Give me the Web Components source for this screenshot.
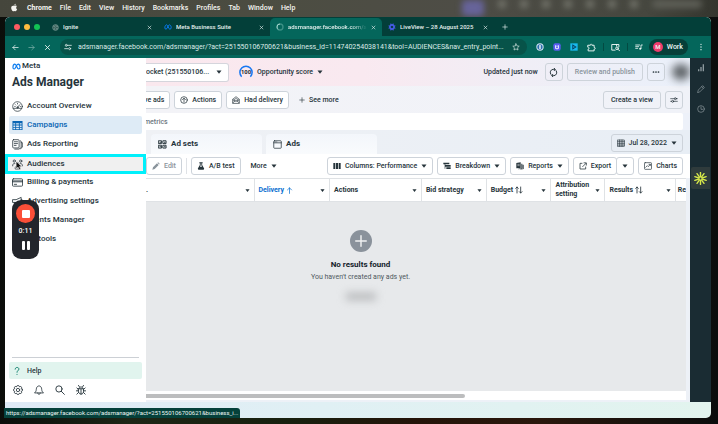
<!DOCTYPE html>
<html lang="en">
<head>
<meta charset="utf-8">
<title>Ads Manager</title>
<style>
html,body{margin:0;height:100%}
body{font:500 7px/10px Roboto,"Liberation Sans",sans-serif;color:#26343b;background:#15160f;overflow:hidden}
</style>
</head>
<body>
<desktop-screen></desktop-screen>
<script>
const define=(name,html,init)=>customElements.define(name,class extends HTMLElement{
  constructor(){
    super();
    const t=document.createElement('template');
    t.innerHTML='<style>*{box-sizing:border-box}button,input,select{font:inherit;color:inherit;margin:0}</style>'+html;
    this.attachShadow({mode:'open'}).append(t.content.cloneNode(true));
  }
  connectedCallback(){ if(init) init(this,this.shadowRoot); }
});

const S='fill="none" stroke="currentColor" stroke-linecap="round" stroke-linejoin="round"';
const gear=(n,r1,r2)=>{let d='';for(let i=0;i<n*2;i++){const a=Math.PI*(i-.5)/n,b=Math.PI*(i+.5)/n,r=i%2?r1:r2;
  d+=(i?'L':'M')+(12+r*Math.cos(a+.06)).toFixed(2)+' '+(12+r*Math.sin(a+.06)).toFixed(2)+'L'+(12+r*Math.cos(b-.06)).toFixed(2)+' '+(12+r*Math.sin(b-.06)).toFixed(2);}return d+'Z';};
const rays=n=>Array.from({length:n},(_,i)=>`<path d="M12 9V1" transform="rotate(${i*360/n} 12 12)"/>`).join('');
const ICONS={
apple:'<path fill="currentColor" d="M16.5 12.6c0-2.4 2-3.600 2.100-3.700-1.200-1.700-3-1.900-3.600-2-1.500-.1-3 .9-3.700.9-.8 0-2-.9-3.200-.8-1.700 0-3.200 1-4.100 2.400-1.700 3-.4 7.500 1.300 10 .8 1.200 1.800 2.500 3.100 2.500 1.200-.1 1.700-.8 3.200-.8s1.900.8 3.200.8 2.200-1.200 3-2.400c.9-1.400 1.300-2.700 1.300-2.800-.1 0-2.600-1-2.600-4.100zM14.100 5.400c.7-.8 1.100-2 1-3.200-1 0-2.200.7-2.900 1.500-.6.7-1.200 1.900-1 3 1.100.1 2.200-.5 2.900-1.300z"/>',
globe:`<g fill="none" stroke="#7fa39e" stroke-width="2"><circle cx="12" cy="12" r="10" fill="#3a5f5a"/><path d="M4 7l6 2 1 4-3 2v5M14 3l-1 4 4 2 4-1M20 16l-5-1-1 5"/></g>`,
meta:'<path fill="none" stroke="#0a7cf0" stroke-width="3" d="M2.500 14.500C2.500 9 5 5.500 7.800 5.500c4.200 0 5.200 13 9.700 13 2.600 0 4-1.700 4-4.500 0-5-2.300-8.500-5.300-8.500-4.400 0-6 13-10.200 13-2.200 0-3.500-1.500-3.500-4z"/>',
spinner:`<circle cx="12" cy="12" r="9" fill="none" stroke="#3b8f84" stroke-width="4"/><path d="M12 3a9 9 0 0 0-9 9c0 3 1.500 5.500 3.500 7" fill="none" stroke="#9ed3ca" stroke-width="3"/>`,
live:`<path fill="#4b5ef0" d="${gear(8,11,8)}"/><circle cx="12" cy="12" r="4" fill="#0a3d4a"/>`,
x:`<path ${S} stroke-width="3" d="M5 5l14 14M19 5L5 19"/>`,
plus:`<path ${S} stroke-width="2.500" d="M12 3v18M3 12h18"/>`,
back:`<path ${S} stroke-width="2.500" d="M21 12H3M11 4l-8 8 8 8"/>`,
fwd:`<path ${S} stroke-width="2.500" d="M3 12h18M13 4l8 8-8 8"/>`,
tune:`<g ${S} stroke-width="2.500"><circle cx="7" cy="7" r="3"/><path d="M13 7h9M2 17h9"/><circle cx="17" cy="17" r="3"/></g>`,
sliders:`<g ${S} stroke-width="2"><path d="M2 8h11M19 8h3M2 16h3M11 16h11"/><circle cx="16" cy="8" r="3"/><circle cx="8" cy="16" r="3"/></g>`,
star:`<path ${S} stroke-width="2" d="M12 2.500l2.900 6.300 6.800.8-5 4.700 1.300 6.800-6-3.400-6 3.400 1.300-6.800-5-4.700 6.800-.8z"/>`,
onepw:'<circle cx="12" cy="12" r="11" fill="#d5e6f5"/><circle cx="12" cy="12" r="8" fill="#2c6fae"/><rect x="10" y="6" width="4" height="12" rx="1" fill="#fff"/>',
ext1:'<rect x="1" y="1" width="22" height="22" rx="6" fill="#5a5cf0"/><path d="M6 6l4 2h4l4-2v8c0 3-3 5-6 5s-6-2-6-5z" fill="#dfe3ff"/><circle cx="12" cy="13" r="3" fill="#5a5cf0"/>',
ext2:'<rect x="1" y="1" width="22" height="22" fill="#18b9ee"/><path d="M7 4l13 8-13 8z" fill="#073b5a"/><path d="M10 9l5 3-5 3z" fill="#18b9ee"/>',
puzzle:`<path ${S} stroke-width="2.500" d="M3 6h6c-1-4 5-4 4 0h6v6c4-1 4 5 0 4v5H3v-5c4 0 4-5 0-5z"/>`,
lens:`<g ${S} stroke-width="2.500"><path d="M21 10V4H2v15h9M15 4v4"/><circle cx="16" cy="14" r="3.500"/><path d="M19 17l4 4"/></g>`,
queue:`<g ${S} stroke-width="2.500"><path d="M2 6h12M2 11h9M2 16h6M18 17V6h4"/></g><circle cx="15.500" cy="17" r="3" fill="currentColor"/>`,
dots:'<g fill="currentColor"><circle cx="12" cy="4" r="2"/><circle cx="12" cy="12" r="2"/><circle cx="12" cy="20" r="2"/></g>',
more:'<g fill="currentColor"><circle cx="4.500" cy="12" r="2.600"/><circle cx="12" cy="12" r="2.600"/><circle cx="19.500" cy="12" r="2.600"/></g>',
gauge:`<g ${S} stroke-width="1.600"><circle cx="12" cy="12" r="10.500"/><path d="M3 16h18M12 14l5-6M6 12h1M7.500 8l.7.700M12 5v1.500M18 12h.500"/><circle cx="12" cy="14" r="1.500"/></g>`,
grid:`<path fill="currentColor" fill-rule="evenodd" d="M1 2h22v20H1zM3 7v3h4V7zM9 7v3h6V7zM17 7v3h4V7zM3 12v3h4v-3zM9 12v3h6v-3zM17 12v3h4v-3zM3 17v3h4v-3zM9 17v3h6v-3zM17 17v3h4v-3z"/>`,
report:`<g ${S} stroke-width="1.700"><rect x="1.500" y="1.500" width="14" height="18" rx="2"/><path d="M5 6h7M5 10h7M5 14h4M18 4l2 1v14l-5 3H6M20 8h2.500v10L19 21"/></g>`,
people:`<g ${S} stroke-width="1.700"><circle cx="12" cy="10" r="2.500"/><circle cx="5" cy="4.500" r="2.500"/><circle cx="19" cy="4.500" r="2.500"/><path d="M7 21v-2c0-5 10-5 10 0v2zM1.500 15v-2c0-2 2-3 4.500-3M22.500 15v-2c0-2-2-3-4.500-3"/></g>`,
card:`<g ${S} stroke-width="1.800"><rect x="1" y="4" width="22" height="16" rx="2"/><path d="M1 8.500h22M1 10.500h22M5 16h5"/></g>`,
horn:`<path ${S} stroke-width="1.800" d="M2 8h7l11-5v16L9 14H2zM5 14v7h4v-7M20 8l2 0v5h-2"/>`,
help:`<path ${S} stroke-width="2.400" d="M7.500 7.500c0-5.500 9-5.500 9 0 0 3.500-4.500 3.500-4.500 7.500M12 20v.300"/>`,
cog:`<g ${S} stroke-width="2"><path d="${gear(8,9,11)}"/><circle cx="12" cy="12" r="4"/></g>`,
bell:`<path ${S} stroke-width="2" d="M2 18.500c4-3 3-7 4-11 1.500-7 10.500-7 12 0 1 4 0 8 4 11zM9 19c0 5 6 5 6 0"/>`,
search:`<g ${S} stroke-width="2.200"><circle cx="9.500" cy="9.500" r="7.500"/><path d="M15 15l7.500 7.500"/></g>`,
bug:`<g ${S} stroke-width="2.200"><path d="M6 9h12v7c0 8-12 8-12 0zM7 9c0-6 10-6 10 0M12 10v12M8 4L6 1M16 4l2-3M6 14H1M6 18l-4 4M18 14h5M18 18l4 4M5 10L2 7M19 10l3-3"/></g>`,
up:`<g ${S} stroke-width="2.200"><circle cx="12" cy="12" r="10"/><path d="M12 18V7M7.500 11L12 6.500l4.500 4.500"/></g>`,
mail:`<g ${S} stroke-width="2"><path d="M2 21V10l10-8 10 8v11zM6 13c0-7 12-7 12 0M3 20l7-6h4l7 6M3 11l7 5M21 11l-7 5"/></g>`,
refresh:`<g ${S} stroke-width="2.600"><path d="M5 17A8.500 8.500 0 0 1 11 3.500h4M19 7a8.500 8.500 0 0 1-6 13.500H9M14 1l3 2.700L14 7M10 17l-3 3.500L10 23"/></g>`,
score:'<path d="M4.500 20A10.500 10.500 0 1 1 19.500 20" fill="none" stroke="#1877f2" stroke-width="2.600"/><text x="12" y="15.500" text-anchor="middle" font-family="Roboto,sans-serif" font-weight="700" font-size="10" fill="#1c2b33">100</text>',
sets:`<g ${S} stroke-width="2.500"><rect x="2" y="2" width="7.500" height="7.500"/><rect x="14" y="2" width="7.500" height="7.500"/><rect x="2" y="14" width="7.500" height="7.500"/><rect x="14" y="14" width="7.500" height="7.500"/><path d="M5 6h2M17 6h2M5 18h2M17 18h2"/></g>`,
ad:`<g ${S} stroke-width="2"><rect x="2" y="2" width="20" height="20" rx="2"/><path d="M2 7.500h20M6 5h.2M10 5h.2"/></g>`,
pencil:'<path fill="currentColor" d="M1 23l2-7L15 4l5 5L8 21zM16.500 2.500L18.500 1 23 5.500 21.500 7.500z"/>',
pen:`<path ${S} stroke-width="2" d="M2 22l2-7L17 2l5 5L9 20zM14 5l5 5"/>`,
flask:'<path fill="currentColor" d="M7 1h10v2.500h-1.500V9L21 19c1 2 0 4-2 4H5c-2 0-3-2-2-4L8.500 9V3.500H7zM11 3.500V10l-2 4h6l-2-4V3.500z"/>',
cols:'<path fill="currentColor" d="M1 3h6v18H1zM9 3h6v18H9zM17 3h6v18h-6z"/>',
break:'<path fill="currentColor" d="M1 2h18v5H1zM7 9h16v5H7zM10 16h13v5H10zM5 7h2v13H5z"/>',
reports:'<path fill="currentColor" d="M1 3l13-2v17L1 19zM16 5h3v15l-12 2v-2l9-1zM20 8h3v13l-10 2v-1l7-1z"/><path stroke="#fff" stroke-width="1.500" d="M4 7h7M4 11h7"/>',
export:`<path ${S} stroke-width="2.300" d="M9 4H3v17h17v-6M11 14L21 4M15 2.500h7v7"/>`,
chart:`<g ${S} stroke-width="2"><rect x="1.500" y="2" width="21" height="20" rx="2"/><path d="M5 16l5-5 3 3 6-7M15 7h4v4"/></g>`,
cal:`<path ${S} stroke-width="2" d="M2 3h20v19H2zM2 8h20M2 13h20M2 18h20M8 3v19M15 3v19"/>`,
bars:'<path fill="currentColor" d="M3 16h4v6H3zM10 9h4v13h-4zM17 1h4v21h-4z"/>',
clock:`<g ${S} stroke-width="2"><circle cx="12" cy="12" r="10"/><path d="M12 6v7h5"/></g>`,
burst:`<g ${S} stroke-width="2.600">${rays(10)}</g>`,
cursor:'<path d="M3 1v20l5-4.500L11.500 23l4-2-3.500-6h7z" fill="#111" stroke="#fff" stroke-width="1.500"/>',
sort:`<path ${S} stroke-width="2.500" d="M6 21V3M2 7l4-4 4 4M17 3v18M13 17l4 4 4-4"/>`,
asc:`<path ${S} stroke-width="2.500" d="M12 22V3M5 10l7-7 7 7"/>`,
caret:'<path fill="currentColor" d="M2 6h20L12 19z"/>'
};
define('ui-icon',`<style>:host{display:inline-flex;flex:none;width:var(--s,10px);height:var(--s,10px)}svg{width:100%;height:100%}</style><svg viewBox="0 0 24 24" aria-hidden="true"></svg>`,
(h,r)=>{h.style.setProperty('--s',(h.getAttribute('size')||10)+'px');r.querySelector('svg').innerHTML=ICONS[h.getAttribute('name')];});

define('ui-button',`<style>
:host{display:flex;flex:none}
button{display:flex;align-items:center;justify-content:center;gap:4px;height:18px;padding:0 5px;border:1px solid #cdd3da;border-radius:3px;background:#fff;white-space:nowrap;width:100%}
:host([plain]) button{border-color:transparent;background:none}
:host([clear]) button{background:none}
:host([wide]) button{padding:0 7px}
:host([square]) button{padding:0;width:18px}
:host([dim]) button{color:#8a949c}
</style><button><slot></slot></button>`,(h,r)=>{const l=h.getAttribute('label');if(l)r.querySelector('button').setAttribute('aria-label',l);});

define('mac-menubar',`<style>
:host{display:flex;align-items:center;height:17px;padding:0 16px 2px 10px;background:linear-gradient(90deg,#45463c,#4c4d42 40%,#4e4d46 64%,#46473f 90%,#34352e);color:#f4f4f0;overflow:hidden}
nav{display:flex;align-items:center;gap:8px;flex:1}
b{font-weight:700}
.tray{display:flex;gap:14px;filter:blur(3px)}
i{width:8px;height:8px;border-radius:4px;background:#77786f}i:first-child{background:#67649a;width:22px;height:16px}i:last-child{width:50px;background:#5f6058}
</style><nav><ui-icon name="apple" size="9"></ui-icon><b>Chrome</b><span>File</span><span>Edit</span><span>View</span><span>History</span><span>Bookmarks</span><span>Profiles</span><span>Tab</span><span>Window</span><span>Help</span></nav>
<div class="tray"><i></i><i></i><i></i><i></i><i></i><i></i><i></i><i></i><i></i></div>`);

define('browser-tab',`<style>
:host{display:flex;align-items:center;gap:4px;width:112px;height:18px;padding:0 6px;color:#e3efed;border-radius:5px 5px 0 0;font-size:6px}
:host([active]){background:#04665b}
span{flex:1;overflow:hidden;white-space:nowrap}
:host([active]) span{-webkit-mask:linear-gradient(90deg,#000 80%,transparent)}
button{display:flex;border:0;background:none;padding:0}
</style><slot name="icon"></slot><span><slot></slot></span><button aria-label="Close tab"><ui-icon name="x" size="5"></ui-icon></button>`);

define('browser-chrome',`<style>
:host{display:block;color:#eef7f5}
.tabs{display:flex;align-items:end;height:19px;background:#033f39;border-radius:5px 5px 0 0;padding-left:9px}
.lights{display:flex;align-self:center;gap:4px;margin-right:6px}
.lights i{width:6px;height:6px;border-radius:3px;background:#fc5b62}.lights i+i{background:#fdbc40}.lights i+i+i{background:#12c454}
.tabs>button{display:flex;align-self:center;border:0;background:none;padding:0;margin-left:8px}
.bar{display:flex;align-items:center;height:22px;background:#04665b;padding:0 6px 0 7px;gap:9px}
.bar>button{display:flex;border:0;background:none;padding:0}
.url{display:flex;align-items:center;gap:6px;flex:1;height:16px;border-radius:8px;background:#075349;padding:0 7px 0 4px;color:#dcebe8}
.url input{flex:1;min-width:0;border:0;padding:0;background:none;outline:0;text-overflow:ellipsis;font-weight:400}
hr{width:1px;height:8px;margin:0 -2px;border:0;background:#034a42}
.bar>.profile{align-items:center;gap:4px;height:16px;background:#063f39;border-radius:8px;padding:0 5px 0 4px;margin-left:-3px}
.profile i{font-style:normal;width:10px;height:10px;border-radius:5px;background:#ef3b6c;font-size:6px;text-align:center}
</style>
<div class="tabs"><div class="lights"><i></i><i></i><i></i></div>
<browser-tab><ui-icon slot="icon" name="globe" size="7"></ui-icon>Ignite</browser-tab>
<browser-tab><ui-icon slot="icon" name="meta" size="8"></ui-icon>Meta Business Suite</browser-tab>
<browser-tab active><ui-icon slot="icon" name="spinner" size="8"></ui-icon>adsmanager.facebook.com/a</browser-tab>
<browser-tab><ui-icon slot="icon" name="live" size="8"></ui-icon>LiveView – 28 August 2025</browser-tab>
<button aria-label="New tab"><ui-icon name="plus" size="6"></ui-icon></button></div>
<div class="bar"><button aria-label="Back"><ui-icon name="back" size="7"></ui-icon></button><button aria-label="Forward" style="opacity:.5"><ui-icon name="fwd" size="7"></ui-icon></button><button aria-label="Stop"><ui-icon name="x" size="7"></ui-icon></button>
<div class="url"><ui-icon name="tune" size="8"></ui-icon><input aria-label="Address" value="adsmanager.facebook.com/adsmanager/?act=251550106700621&amp;business_id=114740254038141&amp;tool=AUDIENCES&amp;nav_entry_point..."><ui-icon name="star" size="8"></ui-icon></div>
<ui-icon name="onepw" size="8"></ui-icon><ui-icon name="ext1" size="8"></ui-icon><ui-icon name="ext2" size="8"></ui-icon><ui-icon name="puzzle" size="9"></ui-icon><hr><ui-icon name="lens" size="9"></ui-icon><hr><ui-icon name="queue" size="8"></ui-icon>
<button class="profile"><i>M</i>Work</button><button aria-label="Menu"><ui-icon name="dots" size="8"></ui-icon></button></div>`);

define('nav-item',`<style>
:host{display:block;height:19px;padding:0 4px}
a{display:flex;align-items:center;gap:4px;height:18px;padding:0 3px;border-radius:2px;color:inherit;text-decoration:none;font-size:8px;white-space:nowrap}
:host([active]) a{background:#deebf6;color:#0a66b4}
:host([hot]){padding:0}
:host([hot]) a{height:20px;padding:0 4px;border:3px solid #00f0fb;background:#f0f0f0;border-radius:0}
:host([help]) a{background:#e1f4ee;height:17px;gap:5px;font-size:7px}
</style><a href="#"><slot></slot></a>`);

define('ads-nav',`<style>
:host{display:flex;flex-direction:column;width:141px;flex:none;background:#fff}
.brand{display:flex;align-items:center;gap:1px;padding:3px 7px 0;font-size:8px}
h1{margin:5px 7px 9px;font:700 12px/12px Roboto,sans-serif}
nav{flex:1}
hr{margin:0 7px 4px;border:0;border-top:1px solid #ccd0d5;width:127px}
.tools{display:flex;gap:11px;padding:4px 8px 7px}
button{display:flex;border:0;padding:0;background:none}
</style>
<div class="brand"><ui-icon name="meta" size="9"></ui-icon>Meta</div><h1>Ads Manager</h1>
<nav>
<nav-item><ui-icon name="gauge" size="11"></ui-icon>Account Overview</nav-item>
<nav-item active><ui-icon name="grid" size="11"></ui-icon>Campaigns</nav-item>
<nav-item><ui-icon name="report" size="11"></ui-icon>Ads Reporting</nav-item>
<nav-item hot><ui-icon name="people" size="11"></ui-icon>Audiences</nav-item>
<nav-item><ui-icon name="card" size="11"></ui-icon>Billing &amp; payments</nav-item>
<nav-item><ui-icon name="horn" size="11"></ui-icon>Advertising settings</nav-item>
<nav-item><ui-icon name="gauge" size="11"></ui-icon>Events Manager</nav-item>
<nav-item><ui-icon name="grid" size="11"></ui-icon>All tools</nav-item>
</nav><hr>
<nav-item help><ui-icon name="help" size="10" style="color:#14806f"></ui-icon>Help</nav-item>
<div class="tools"><button aria-label="Settings"><ui-icon name="cog"></ui-icon></button><button aria-label="Notifications"><ui-icon name="bell"></ui-icon></button><button aria-label="Search"><ui-icon name="search"></ui-icon></button><button aria-label="Report a bug"><ui-icon name="bug"></ui-icon></button></div>`);

define('ads-header',`<style>
:host{display:block;background:linear-gradient(90deg,#f8edf2,#f4eff6 40%,#eef1f8 75%,#edf1f9)}
.row{display:flex;align-items:center;gap:4px;padding-right:7px}
.top{height:28px;background:linear-gradient(90deg,#fae8ee,#f9e9f0 40%,#f0eef6 70%,#eaf0fa)}
.filters{height:27px;background:linear-gradient(90deg,#f3f3f7,#f0f2f8)}
.acct{display:flex;align-items:center;height:19px;width:83px;background:#fff;border:1px solid #d5d5dc;border-left:0;border-radius:0 3px 3px 0}
select{appearance:none;border:0;background:none;padding:0;width:70px;outline:0}
.sp{flex:1}
.ve{margin-left:-8px}
.blur{width:18px;height:16px;margin:0 -7px 0 3px;border-radius:8px;background:#5f6468;filter:blur(4px)}
.search{display:block;padding-right:7px}
input{display:block;width:100%;height:17px;border:0;border-radius:0 2px 2px 0;background:#fff;padding:0;text-indent:-2px;outline:0}
input::placeholder{color:#6d7780;opacity:1}
.tabs{display:flex;gap:4px;padding:5px 7px 0 5px;height:24px;align-items:end;background:linear-gradient(90deg,#eff1f5,#e8eef5)}
.tab{display:flex;align-items:center;gap:4px;flex:0 0 111px;height:20px;padding:0 7px;border:0;border-radius:4px 4px 0 0;background:linear-gradient(#f3f6fb,#f9fbfd);font-size:8px;font-weight:700}
.tabs ui-button{align-self:start;margin-top:-1px}
</style>
<div class="row top"><div class="acct"><select aria-label="Ad account"><option>ocket (251550106...</option></select><ui-icon name="caret" size="6"></ui-icon></div>
<ui-button plain><ui-icon name="score" size="14"></ui-icon>Opportunity score<ui-icon name="caret" size="6"></ui-icon></ui-button>
<span class="sp"></span><span>Updated just now</span><ui-button clear square label="Refresh" style="margin-left:3px"><ui-icon name="refresh" size="9"></ui-icon></ui-button><ui-button clear dim wide>Review and publish</ui-button><ui-button clear square label="More"><ui-icon name="more" size="8"></ui-icon></ui-button><span class="blur"></span></div>
<div class="row filters"><ui-button class="ve">ve ads</ui-button><ui-button><ui-icon name="up" size="8"></ui-icon>Actions</ui-button><ui-button><ui-icon name="mail" size="8"></ui-icon>Had delivery</ui-button><ui-button plain><ui-icon name="plus" size="6"></ui-icon>See more</ui-button><span class="sp"></span><ui-button clear wide>Create a view</ui-button><ui-button clear square label="View options"><ui-icon name="sliders" size="8"></ui-icon></ui-button></div>
<div class="search"><input aria-label="Search" placeholder="metrics"></div>
<div class="tabs"><button class="tab"><ui-icon name="sets" size="9"></ui-icon>Ad sets</button><button class="tab"><ui-icon name="ad" size="9"></ui-icon>Ads</button><span class="sp"></span><ui-button clear><ui-icon name="cal" size="8"></ui-icon>Jul 28, 2022<ui-icon name="caret" size="6"></ui-icon></ui-button></div>`);

define('ads-toolbar',`<style>
:host{display:flex;align-items:center;gap:4px;height:24px;padding-right:7px;background:#fff}
hr{width:1px;height:16px;margin:0;border:0;background:#dfe2e6}
.sp{flex:1}
.split{display:flex}.split ui-button+ui-button{margin-left:-1px}
</style><ui-button dim><ui-icon name="pencil" size="8"></ui-icon>Edit</ui-button><hr><ui-button><ui-icon name="flask" size="8"></ui-icon>A/B test</ui-button><ui-button plain>More<ui-icon name="caret" size="6"></ui-icon></ui-button><span class="sp"></span>
<ui-button><ui-icon name="cols" size="8"></ui-icon>Columns: Performance<ui-icon name="caret" size="6"></ui-icon></ui-button>
<ui-button><ui-icon name="break" size="8"></ui-icon>Breakdown<ui-icon name="caret" size="6"></ui-icon></ui-button>
<ui-button><ui-icon name="reports" size="8"></ui-icon>Reports<ui-icon name="caret" size="6"></ui-icon></ui-button>
<span class="split"><ui-button><ui-icon name="export" size="8"></ui-icon>Export</ui-button><ui-button square label="Export options"><ui-icon name="caret" size="6"></ui-icon></ui-button></span>
<ui-button><ui-icon name="chart" size="8"></ui-icon>Charts</ui-button>`);

define('results-table',`<style>
:host{display:flex;flex-direction:column;flex:1;min-height:0;margin-right:4px;background:#e7e9eb}
table{width:100%;table-layout:fixed;border-collapse:collapse;background:#fff}
th{height:23px;padding:0 4px;border:1px solid #dfe2e5;border-left:0;text-align:left;font-weight:700;line-height:9px;overflow:hidden;white-space:nowrap}
th div{display:flex;align-items:center;gap:2px}
th span{flex:1}
th:first-child{padding-left:0}
th:last-child{border-right:0;padding:0 0 0 2px}
.on{color:#0a6fd0}.on span+ui-icon{color:#1c2b33}
.two{white-space:normal}
.empty{flex:1;display:flex;flex-direction:column;align-items:center;padding:28px 111px 0 0;text-align:center}
.add{display:grid;place-items:center;width:22px;height:22px;border-radius:11px;background:#8a929b;color:#f0f1f2}
h2{margin:8px 0 1px;font:700 8px/10px Roboto,sans-serif;color:#14212a}p{margin:0;color:#4f5960;line-height:12px;font-weight:400}
.smear{width:30px;height:7px;margin-top:10px;background:#b4b6b8;filter:blur(4px)}
.scroll{height:9px;background:#fff;padding-top:3px}.scroll i{display:block;width:59%;height:4px;border-radius:0 2px 2px 0;background:#bcbdbe}
</style>
<table><colgroup><col style="width:20%"><col style="width:14%"><col style="width:17%"><col style="width:12%"><col style="width:12%"><col style="width:10%"><col style="width:13%"><col></colgroup>
<thead><tr><th><div><span>.</span><ui-icon name="caret" size="5"></ui-icon></div></th>
<th class="on"><div>Delivery <ui-icon name="asc" size="7"></ui-icon><span></span><ui-icon name="caret" size="5"></ui-icon></div></th>
<th><div><span>Actions</span><ui-icon name="caret" size="5"></ui-icon></div></th>
<th><div><span>Bid strategy</span><ui-icon name="caret" size="5"></ui-icon></div></th>
<th><div>Budget <ui-icon name="sort" size="8"></ui-icon><span></span><ui-icon name="caret" size="5"></ui-icon></div></th>
<th class="two"><div><span>Attribution setting</span><ui-icon name="caret" size="5"></ui-icon></div></th>
<th><div>Results <ui-icon name="sort" size="8"></ui-icon><span></span><ui-icon name="caret" size="5"></ui-icon></div></th><th>Re</th></tr></thead></table>
<div class="empty"><div class="add"><ui-icon name="plus" size="14"></ui-icon></div><h2>No results found</h2><p>You haven't created any ads yet.</p><div class="smear"></div></div>
<div class="scroll"><i></i></div>`);

define('side-rail',`<style>
:host{display:flex;flex-direction:column;align-items:center;width:21px;flex:none;background:#1a2c33;color:#8e9a9f}
ui-icon{margin-bottom:12px}ui-icon:first-of-type{margin:6px 0 13px}
.burst{display:grid;place-items:center;width:19px;height:22px;margin-top:42px;background:#2f3b3c;color:#d7e84a;border-radius:2px 0 0 2px}.burst ui-icon:first-of-type{margin:0}
</style><ui-icon name="bars" size="8"></ui-icon><ui-icon name="pen" size="8"></ui-icon><ui-icon name="clock" size="8"></ui-icon><div class="burst"><ui-icon name="burst" size="13"></ui-icon></div>`);

define('screen-recorder',`<style>
:host{display:flex;flex-direction:column;align-items:center;gap:4px;width:27px;padding:4px 0 9px;border-radius:9px;background:#23252b;color:#fff;line-height:8px}
button{display:grid;place-items:center;border:0;padding:0;background:none}
.stop{width:19px;height:19px;border-radius:10px;background:#fb4f38}.stop i{width:8px;height:8px;border-radius:1px;background:#fff}
.pause{grid-auto-flow:column;gap:2px;margin-top:2px}.pause i{width:3px;height:9px;background:#fff;border-radius:1px}
</style><button class="stop" aria-label="Stop recording"><i></i></button><span>0:11</span><button class="pause" aria-label="Pause"><i></i><i></i></button>`);

define('desktop-screen',`<style>
:host{display:flex;flex-direction:column;height:100vh;position:relative;
background:linear-gradient(90deg,#0b0d0a,#1d2616 18%,#17200f 40%,#241409 58%,#2a170c 75%,#15110d 92%,#0a0c0c)}
.win{display:flex;flex-direction:column;flex:1;min-height:0;margin:0 7px 6px 5px;border-radius:5px;overflow:hidden;background:linear-gradient(90deg,#dfeaf6,#e0f0f4 45%,#e2f4ee)}
.page{display:flex;flex:1;min-height:0;margin-bottom:16px}
main{display:flex;flex-direction:column;flex:1;min-width:0;background:#edf1f7;overflow:hidden}
results-table{margin-bottom:2px}
screen-recorder{position:absolute;left:12px;top:200px}
.cursor{position:absolute;left:15px;top:161px}
.status{position:absolute;left:4px;bottom:6px;height:10px;padding:0 2px;border-radius:0 3px 0 0;background:#05413b;color:#edf6f4;font-size:6px;font-weight:400;white-space:nowrap}
</style>
<mac-menubar></mac-menubar>
<div class="win"><browser-chrome></browser-chrome>
<div class="page"><ads-nav></ads-nav><main><ads-header></ads-header><ads-toolbar></ads-toolbar><results-table></results-table></main><side-rail></side-rail></div></div>
<ui-icon class="cursor" name="cursor" size="9"></ui-icon>
<screen-recorder></screen-recorder>
<div class="status">https://adsmanager.facebook.com/adsmanager/?act=251550106700621&amp;business_i...</div>`);
</script>
</body>
</html>
